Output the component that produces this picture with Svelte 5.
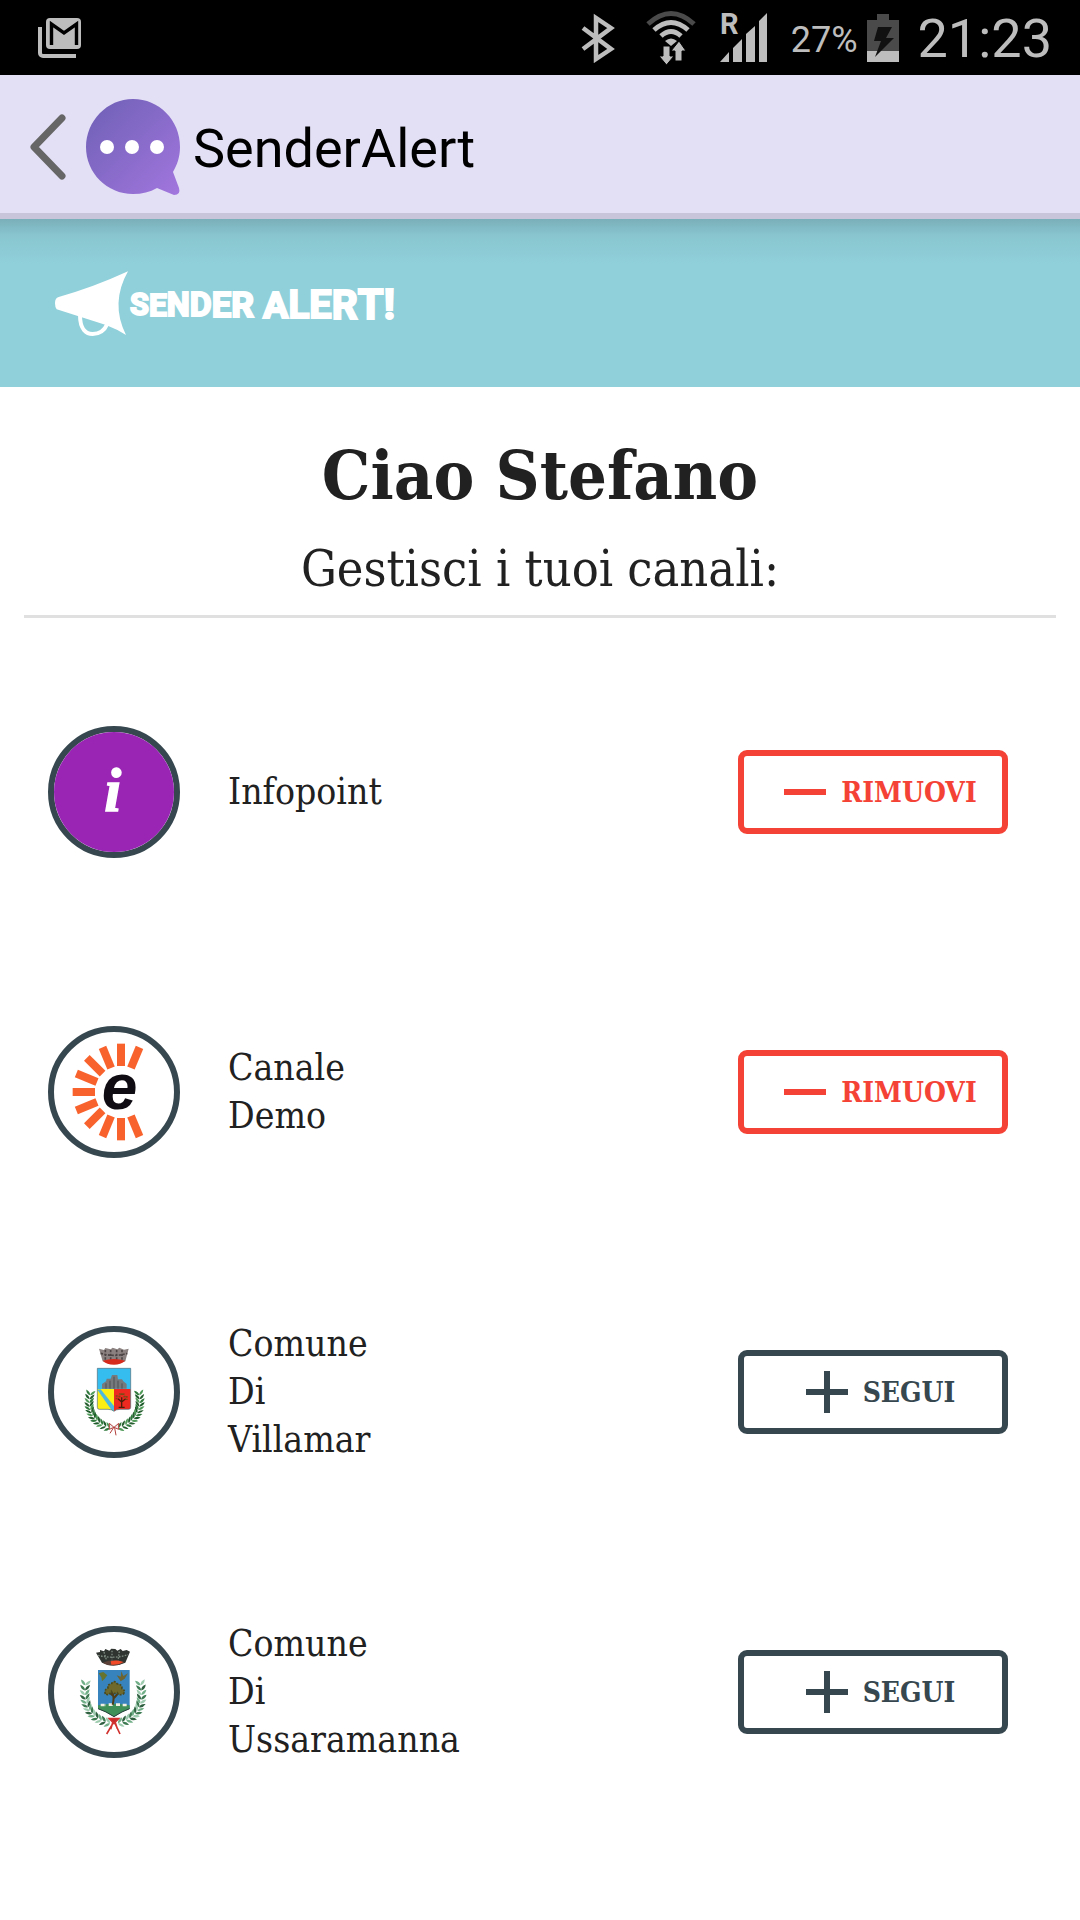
<script>
	let channels = $state([
		{ id: 'infopoint', name: 'Infopoint', logo: 'info', followed: true },
		{ id: 'demo', name: 'Canale Demo', logo: 'demo', followed: true },
		{ id: 'villamar', name: 'Comune Di Villamar', logo: 'villamar', followed: false },
		{ id: 'ussaramanna', name: 'Comune Di Ussaramanna', logo: 'ussaramanna', followed: false }
	]);

	function toggle(channel) {
		channel.followed = !channel.followed;
	}

	// The brand lettering grows from left to right, around its middle line
	const brand = [...'SENDER ALERT!'].map((char, i) => ({
		char,
		size: 92 + i * 3
	}));

	const rays = Array.from({ length: 11 }, (_, i) => 22.5 + i * -22.5);

	const leafColors = ['#2f7a3c', '#1e5c2b', '#4f9a58', '#285f30'];
	const paleColors = ['#6fae86', '#3d7a52', '#9ccbae', '#2f6040'];

	// Leaves in pairs along a quadratic curve, one half of a wreath
	function branch(x0, y0, x1, y1, x2, y2, colors) {
		const leaves = [];
		const count = 13;
		for (let i = 0; i < count; i++) {
			const t = i / (count - 1);
			const x = (1 - t) ** 2 * x0 + 2 * t * (1 - t) * x1 + t * t * x2;
			const y = (1 - t) ** 2 * y0 + 2 * t * (1 - t) * y1 + t * t * y2;
			const dx = (1 - t) * (x1 - x0) + t * (x2 - x1);
			const dy = (1 - t) * (y1 - y0) + t * (y2 - y1);
			const angle = (Math.atan2(dy, dx) * 180) / Math.PI;
			for (const side of [-1, 1]) {
				leaves.push({ x, y, angle: angle + 180 + side * 42, color: colors[(i + (side > 0 ? 2 : 0)) % 4] });
			}
		}
		return leaves;
	}

	const villamarLeaves = [
		...branch(180, 256, 168, 330, 240, 354, leafColors),
		...branch(328, 256, 338, 330, 264, 354, leafColors)
	];
	const ussaramannaLeaves = [
		...branch(166, 226, 156, 320, 240, 340, paleColors),
		...branch(332, 226, 346, 320, 264, 340, paleColors)
	];
</script>

<div class="status-bar">
	<svg class="mail" width="44" height="40" viewBox="0 0 44 40" aria-label="Gmail">
		<path d="M2 9v26a3 3 0 0 0 3 3h33" fill="none" stroke="#bdbdbd" stroke-width="4" />
		<rect x="8" y="0" width="35" height="31" rx="4" fill="#bdbdbd" />
		<path d="M13.500 27V6L26 15L38.500 6V27" fill="none" stroke="#000" stroke-width="3.400" />
	</svg>
	<div class="status-icons">
		<svg width="34" height="50" viewBox="0 0 34 50" aria-label="Bluetooth">
			<path d="M2 15L30 36L15 46V5L30 15L2 36" fill="none" stroke="#bdbdbd" stroke-width="4.500" />
		</svg>
		<svg class="wifi" width="52" height="56" viewBox="0 0 52 56" aria-label="Wi-Fi">
			<g fill="none" stroke-width="5">
				<path d="M3 14Q26 -7 49 14" stroke="#4a4a4a" />
				<path d="M9 20Q26 5 43 20" stroke="#bdbdbd" />
				<path d="M16 26Q26 17 36 26" stroke="#bdbdbd" />
			</g>
			<path d="M20 31Q26 26 32 31L26 36Z" fill="#bdbdbd" />
			<path d="M18 36h7v10h4l-7.500 9L14 46h4z M30 51V41h-4l8-10l7 10h-4v10z" fill="#bdbdbd" stroke="#000" />
		</svg>
		<svg class="signal" width="50" height="64" viewBox="0 -6 50 64" aria-label="Roaming signal">
			<path d="M1 50L10 40V50Z M14 50V36L23 27V50Z M27 50V22L36 14V50Z M40 50V9L48 1V50Z" fill="#bdbdbd" />
			<text x="1" y="22" class="roaming">R</text>
		</svg>
		<span class="percent">27%</span>
		<svg class="battery" width="34" height="50" viewBox="0 0 34 50" aria-label="Battery">
			<path d="M1 7H11V1H23V7H33V38H1Z" fill="#4a4a4a" />
			<path d="M1 38H33V49H1Z" fill="#bdbdbd" />
			<path d="M12 14H26L20 25H28L9 44L15 28H8Z" fill="#111" />
		</svg>
		<span class="clock">21:23</span>
	</div>
</div>

<header class="app-bar">
	<a class="back" href="#indietro" aria-label="Indietro">
		<svg width="38" height="68" viewBox="0 0 38 68">
			<path d="M33 5L5 34L33 63" fill="none" stroke="#666" stroke-width="7" stroke-linecap="round" stroke-linejoin="round" />
		</svg>
	</a>
	<svg width="96" height="98" viewBox="0 0 96 98" aria-hidden="true">
		<defs>
			<linearGradient id="bubble" x1="0" y1="0" x2="1" y2="1">
				<stop offset="0.150" stop-color="#7563bb" />
				<stop offset="1" stop-color="#a276de" />
			</linearGradient>
		</defs>
		<path
			d="M48 1C74 1 95 22 95 49C95 59 92 67 88 74L94 90Q96 97 89 97L72 90C65 94 57 96 48 96C22 96 1 75 1 49S22 1 48 1Z"
			fill="url(#bubble)"
		/>
		<circle cx="22" cy="49" r="7" fill="#fff" />
		<circle cx="47" cy="49" r="7" fill="#fff" />
		<circle cx="72" cy="49" r="7" fill="#fff" />
	</svg>
	<span class="app-title">SenderAlert</span>
</header>

<div class="banner">
	<svg width="352" height="66" viewBox="75 60 1056 198" role="img" aria-label="Sender Alert!">
		<path d="M150 196C150 240 170 252 188 252C208 252 224 240 232 222" fill="none" stroke="#fff" stroke-width="12" />
		<path d="M75 160Q75 143 86 141Q190 112 294 64Q240 160 288 255Q262 238 228 225L80 178Q75 172 75 160Z" fill="#fff" />
		<text x="300" y="195" class="brand">{#each brand as { char, size }}<tspan font-size={size} dy="1">{char}</tspan>{/each}</text>
	</svg>
</div>

<main>
	<div class="intro">
		<h1>Ciao Stefano</h1>
		<p>Gestisci i tuoi canali:</p>
	</div>

	<ul>
		{#each channels as channel (channel.id)}
			<li>
				<div class="avatar">
					{#if channel.logo === 'info'}
						<svg viewBox="72 66 360 360" aria-hidden="true">
							<rect x="72" y="66" width="360" height="360" fill="#9a25b5" />
							<text x="248" y="303" class="info-letter">i</text>
						</svg>
					{:else if channel.logo === 'demo'}
						<svg viewBox="72 66 360 360" aria-hidden="true">
							{#each rays as angle}
								<rect x="261" y="101" width="24" height="67" fill="#f8622c" transform="rotate({angle} 273 246)" />
							{/each}
							<text x="269" y="298" class="demo-letter">e</text>
						</svg>
					{:else if channel.logo === 'villamar'}
						<svg viewBox="72 66 360 360" aria-hidden="true">
							<!-- mural crown -->
							<path d="M207 116L222 120L226 114L242 118L248 113L262 118L268 113L282 119L296 116L286 154Q252 168 218 154Z" fill="#8b8180" />
							<path d="M212 130Q252 142 292 130M226 120V150M242 120V154M260 120V154M276 120V150" fill="none" stroke="#4c4444" stroke-width="5" stroke-dasharray="7 4" />
							<path d="M218 152Q252 142 286 152Q272 164 252 164Q230 164 218 152Z" fill="#d52a1c" />
							<!-- shield -->
							<path d="M202 175H302V237H202Z" fill="#35bdf0" />
							<path d="M202 237H252V304Q246 298 234 298H208Q202 298 202 292Z" fill="#fbee14" />
							<path d="M252 237H302V292Q302 298 296 298H270Q258 298 252 304Z" fill="#ee2a20" />
							<path d="M202 239L212 238L252 288V304L244 299Z" fill="#4db9df" />
							<path d="M216 236V222L228 214L230 206H242L246 195H262L264 208H276L280 214L290 222V236Z" fill="#777a7c" />
							<path d="M228 220V236M240 212V236M252 200V236M264 212V236M276 220V236" stroke="#4c5054" stroke-width="3" />
							<path d="M202 175H302V292Q302 298 296 298H270Q258 298 252 304Q246 298 234 298H208Q202 298 202 292Z" fill="none" stroke="#4f6a78" stroke-width="2" />
							<path d="M275 292V262M275 276L264 266M275 276L287 266M266 292H284" fill="none" stroke="#4d1d0a" stroke-width="4" />
							<path d="M260 268V256M268 262L270 250M280 250L284 262M290 258V270M275 250V258" stroke="#7d4a16" stroke-width="6" stroke-dasharray="5 3" />
							<!-- wreath -->
							{#each villamarLeaves as leaf}
								<path d="M0 0Q9 -7 21 0Q9 7 0 0Z" fill={leaf.color} transform="translate({leaf.x} {leaf.y}) rotate({leaf.angle})" />
							{/each}
							<path d="M252 352L238 340V358ZM252 352L266 340V358ZM250 354L240 370M254 354L258 376" fill="#eee" stroke="#b3403c" stroke-width="3" />
						</svg>
					{:else}
						<svg viewBox="72 66 360 360" aria-hidden="true">
							<!-- mural crown -->
							<path d="M198 128L210 126L210 120L222 124L226 117L238 122L244 116L256 117L262 122L272 117L278 123L290 120L300 125L286 158Q252 174 216 158Z" fill="#2f3430" />
							<path d="M204 136Q252 148 294 134M222 126L230 152M246 122V152M268 124L264 152" fill="none" stroke="#7d8a80" stroke-width="4" stroke-dasharray="5 4" />
							<path d="M218 158Q252 144 284 157Q268 167 250 167Q230 167 218 158Z" fill="#5b4138" />
							<path d="M242 154Q262 148 280 156Q266 166 244 164Z" fill="#f04a28" />
							<!-- shield -->
							<path d="M204 180H299V296Q276 304 252 320Q228 304 204 296Z" fill="#3683bd" />
							<path d="M204 286Q252 276 299 286V296Q276 304 252 320Q228 304 204 296Z" fill="#3f9058" />
							<path d="M204 296Q228 304 252 320Q276 304 299 296" fill="none" stroke="#29413a" stroke-width="3" />
							<path d="M212 285h16M236 284h14M258 284h14M278 285h14" stroke="#f2efe2" stroke-width="8" stroke-dasharray="12 3" />
							<path d="M248 284Q254 262 246 244M252 264L268 246M250 258L232 242" fill="none" stroke="#4f3d18" stroke-width="6" />
							<path d="M226 252Q222 238 234 234Q232 222 244 222Q252 208 262 222Q276 222 276 236Q288 242 280 252Q266 258 262 248Q250 254 244 244Q238 258 226 252Z" fill="#6f6a2c" stroke="#4a4a1d" stroke-width="5" stroke-dasharray="6 4" />
							<path d="M206 190L220 186L232 196L224 206L216 214L214 202Z" fill="#66732e" />
							<path d="M272 214L260 196L272 200L274 184L280 198L294 190L284 206Z" fill="#6c6433" />
							<!-- wreath -->
							{#each ussaramannaLeaves as leaf}
								<path d="M0 0Q9 -8 22 0Q9 8 0 0Z" fill={leaf.color} transform="translate({leaf.x} {leaf.y}) rotate({leaf.angle})" />
							{/each}
							<path d="M252 340L238 326H266ZM250 338L230 372M254 338L270 372M248 338L242 358M256 338L262 356" fill="#c3272b" stroke="#d1322f" stroke-width="5" />
						</svg>
					{/if}
				</div>
				<div class="name">
					{#each channel.name.split(' ') as word}
						<span>{word}</span>
					{/each}
				</div>
				<button class:followed={channel.followed} onclick={() => toggle(channel)}>
					<svg width="72" height="72" viewBox="0 0 24 24" aria-hidden="true">
						<path d={channel.followed ? 'M5 12H19' : 'M5 12H19M12 5V19'} fill="none" stroke="currentColor" stroke-width="2" />
					</svg>
					<span>{channel.followed ? 'RIMUOVI' : 'SEGUI'}</span>
				</button>
			</li>
		{/each}
	</ul>
</main>

<style>
	:global(body) {
		margin: 0;
		background: #fff;
		color: #212121;
		font-family: 'Roboto Slab', 'DejaVu Serif Condensed', 'DejaVu Serif', serif;
	}

	.status-bar {
		display: flex;
		align-items: center;
		justify-content: space-between;
		box-sizing: border-box;
		height: 75px;
		padding: 0 28px 0 38px;
		background: #000;
		color: #bdbdbd;
		font-family: Roboto, sans-serif;
	}

	.status-icons {
		display: flex;
		align-items: center;
	}

	.wifi {
		margin-left: 30px;
	}

	.signal {
		margin-left: 22px;
	}

	.roaming {
		fill: #bdbdbd;
		font-size: 29px;
		font-weight: 700;
	}

	.percent {
		margin: 4px 8px 0 22px;
		font-size: 36px;
	}

	.clock {
		margin: 2px 0 0 18px;
		font-size: 54px;
		line-height: 72px;
	}

	.app-bar {
		display: flex;
		align-items: center;
		box-sizing: border-box;
		height: 144px;
		padding: 6px 29px 0;
		background: #e3dff5;
		border-bottom: 6px solid #c8c4d9;
		color: #000;
		font-family: Roboto, sans-serif;
	}

	.back {
		display: flex;
		margin-right: 18px;
	}

	.app-title {
		margin: 4px 0 0 12px;
		font-size: 54px;
		line-height: 72px;
	}

	.banner {
		display: flex;
		box-sizing: border-box;
		height: 168px;
		padding: 51px 55px;
		background: linear-gradient(#7aafb9, #88c5cf 16px, #90d0da 44px);
	}

	.brand {
		fill: #fff;
		stroke: #fff;
		stroke-width: 6;
		font-family: Impact, Roboto, sans-serif;
		font-weight: 700;
	}

	main {
		padding: 0 24px;
	}

	.intro {
		padding: 46px 0 10px;
		border-bottom: 3px solid #e0e0e0;
		text-align: center;
	}

	h1 {
		margin: 0;
		font-size: 68px;
		line-height: 84px;
	}

	p {
		margin: 16px 0 0;
		font-size: 50px;
		line-height: 72px;
	}

	ul {
		margin: 24px 0 0;
		padding: 0;
		list-style: none;
	}

	li {
		display: flex;
		align-items: center;
		height: 300px;
		padding: 0 48px 0 24px;
	}

	.avatar {
		flex: none;
		width: 120px;
		height: 120px;
		overflow: hidden;
		border: 6px solid #37474f;
		border-radius: 50%;
	}

	.avatar svg {
		display: block;
	}

	.info-letter {
		fill: #fff;
		stroke: #fff;
		stroke-width: 4;
		font-family: 'Liberation Serif', serif;
		font-size: 184px;
		font-style: italic;
		font-weight: 700;
		text-anchor: middle;
	}

	.demo-letter {
		fill: #100c14;
		font-family: 'Liberation Sans', sans-serif;
		font-size: 192px;
		font-style: italic;
		font-weight: 700;
		text-anchor: middle;
	}

	.name {
		display: flex;
		flex-direction: column;
		margin-left: 48px;
		font-size: 37px;
		line-height: 48px;
	}

	button {
		display: flex;
		align-items: center;
		justify-content: center;
		box-sizing: border-box;
		width: 270px;
		height: 84px;
		margin-left: auto;
		padding: 0;
		background: #fff;
		border: 6px solid;
		border-radius: 9px;
		color: #37474f;
		font-family: inherit;
		font-size: 28px;
		font-weight: 700;
	}

	button.followed {
		color: #f44336;
	}
</style>
